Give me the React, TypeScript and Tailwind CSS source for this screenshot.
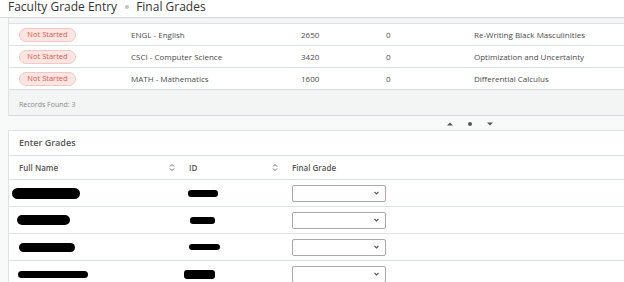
import React from "react";

const topRows = [
  { subj: "ENGL - English", num: "2650", cnt: "0", title: "Re-Writing Black Masculinities" },
  { subj: "CSCI - Computer Science", num: "3420", cnt: "0", title: "Optimization and Uncertainty" },
  { subj: "MATH - Mathematics", num: "1600", cnt: "0", title: "Differential Calculus" },
];

const gradeRows = [
  { nx: 3, nw: 68, nh: 11, ix: 10, iw: 30, ih: 7 },
  { nx: 8, nw: 53, nh: 10, ix: 12, iw: 25, ih: 7 },
  { nx: 10, nw: 56, nh: 9, ix: 11, iw: 31, ih: 6 },
  { nx: 9, nw: 70, nh: 7, ix: 6, iw: 31, ih: 9 },
];

function SortIcon() {
  return (
    <svg width="6" height="9" viewBox="0 0 6 9" fill="none" stroke="#6b6b6b" strokeWidth="1">
      <path d="M1 3.5 L3 1.5 L5 3.5" />
      <path d="M1 5.5 L3 7.5 L5 5.5" />
    </svg>
  );
}

function Select() {
  return (
    <div className="w-[94px] h-[17px] border border-[#a8a8a8] rounded-[2px] bg-white flex items-center justify-end pr-[6px]">
      <svg width="5" height="4" viewBox="0 0 5 4" fill="none" stroke="#555" strokeWidth="1.1">
        <path d="M0.5 1 L2.5 3 L4.5 1" />
      </svg>
    </div>
  );
}

export default function App() {
  return (
    <div
      className="w-[624px] h-[282px] overflow-hidden bg-white text-[#4a4a4a]"
      style={{ fontFamily: '"Open Sans", "Liberation Sans", sans-serif' }}
    >
      <header className="h-[18px] border-b border-[#d4d6d8] pl-[8px] overflow-hidden bg-white">
        <div className="flex items-center text-[12px] leading-[14px] text-[#333]">
          <span>Faculty Grade Entry</span>
          <span className="ml-[8px] mr-[7px] w-[4px] h-[4px] rounded-full bg-[#c2c2c2]" />
          <span>Final Grades</span>
        </div>
      </header>

      <div className="bg-[#f8f9f9] pl-[8px]">
        <section className="border-l border-[#dfe3e6]">
          <div className="h-[5px] bg-[#f4f5f6]" />
          {topRows.map((r) => (
            <div
              key={r.subj}
              className="h-[22px] border-t border-[#dde2e7] bg-white flex items-center text-[8px] text-[#4a4a4a]"
            >
              <div className="w-[122px] pl-[10px] flex">
                <span className="w-[57px] h-[14px] rounded-full border border-[#f6c6c0] bg-[#fde5e2] text-[#d9574f] text-[7.5px] flex items-center justify-center">
                  Not Started
                </span>
              </div>
              <div className="w-[170px]">{r.subj}</div>
              <div className="w-[85px]">{r.num}</div>
              <div className="w-[88px]">{r.cnt}</div>
              <div>{r.title}</div>
            </div>
          ))}
          <div className="h-[27px] border-t border-b border-[#d7dbdf] bg-[#f3f5f5] pl-[10px] pt-[10px]">
            <span className="block text-[7px] leading-[10px] text-[#8a8a8a]">Records Found: 3</span>
          </div>
        </section>

        <div className="h-[14px] flex items-center pl-[439px] pt-[2px] gap-[15px]">
          <svg width="6" height="4" viewBox="0 0 6 4">
            <path d="M0 3.5 L3 0.5 L6 3.5 Z" fill="#555" />
          </svg>
          <span className="w-[4px] h-[4px] rounded-full bg-[#555]" />
          <svg width="6" height="4" viewBox="0 0 6 4">
            <path d="M0 0.5 L3 3.5 L6 0.5 Z" fill="#555" />
          </svg>
        </div>

        <section className="border-l border-t border-[#dde2e7] bg-white">
          <div className="h-[25px] border-b border-[#dde2e7] flex items-center pl-[10px] text-[9px] font-semibold text-[#555]">
            Enter Grades
          </div>
          <div className="h-[24px] border-b border-[#dde2e7] flex items-center text-[8px] font-semibold text-[#555]">
            <div className="w-[169px] pl-[10px] pr-[3px] flex items-center justify-between">
              <span>Full Name</span>
              <SortIcon />
            </div>
            <div className="w-[103px] pl-[11px] pr-[3px] flex items-center justify-between">
              <span>ID</span>
              <SortIcon />
            </div>
            <div className="pl-[11px]">Final Grade</div>
          </div>
          {gradeRows.map((g, i) => (
            <div key={i} className="h-[27px] border-b border-[#dde2e7] flex items-center">
              <div className="w-[169px] flex items-center">
                <div
                  className="bg-black rounded-full"
                  style={{ marginLeft: g.nx, width: g.nw, height: g.nh }}
                />
              </div>
              <div className="w-[103px] flex items-center">
                <div
                  className="bg-black rounded-[3px]"
                  style={{ marginLeft: g.ix, width: g.iw, height: g.ih }}
                />
              </div>
              <div className="pl-[11px]">
                <Select />
              </div>
            </div>
          ))}
        </section>
      </div>
    </div>
  );
}
